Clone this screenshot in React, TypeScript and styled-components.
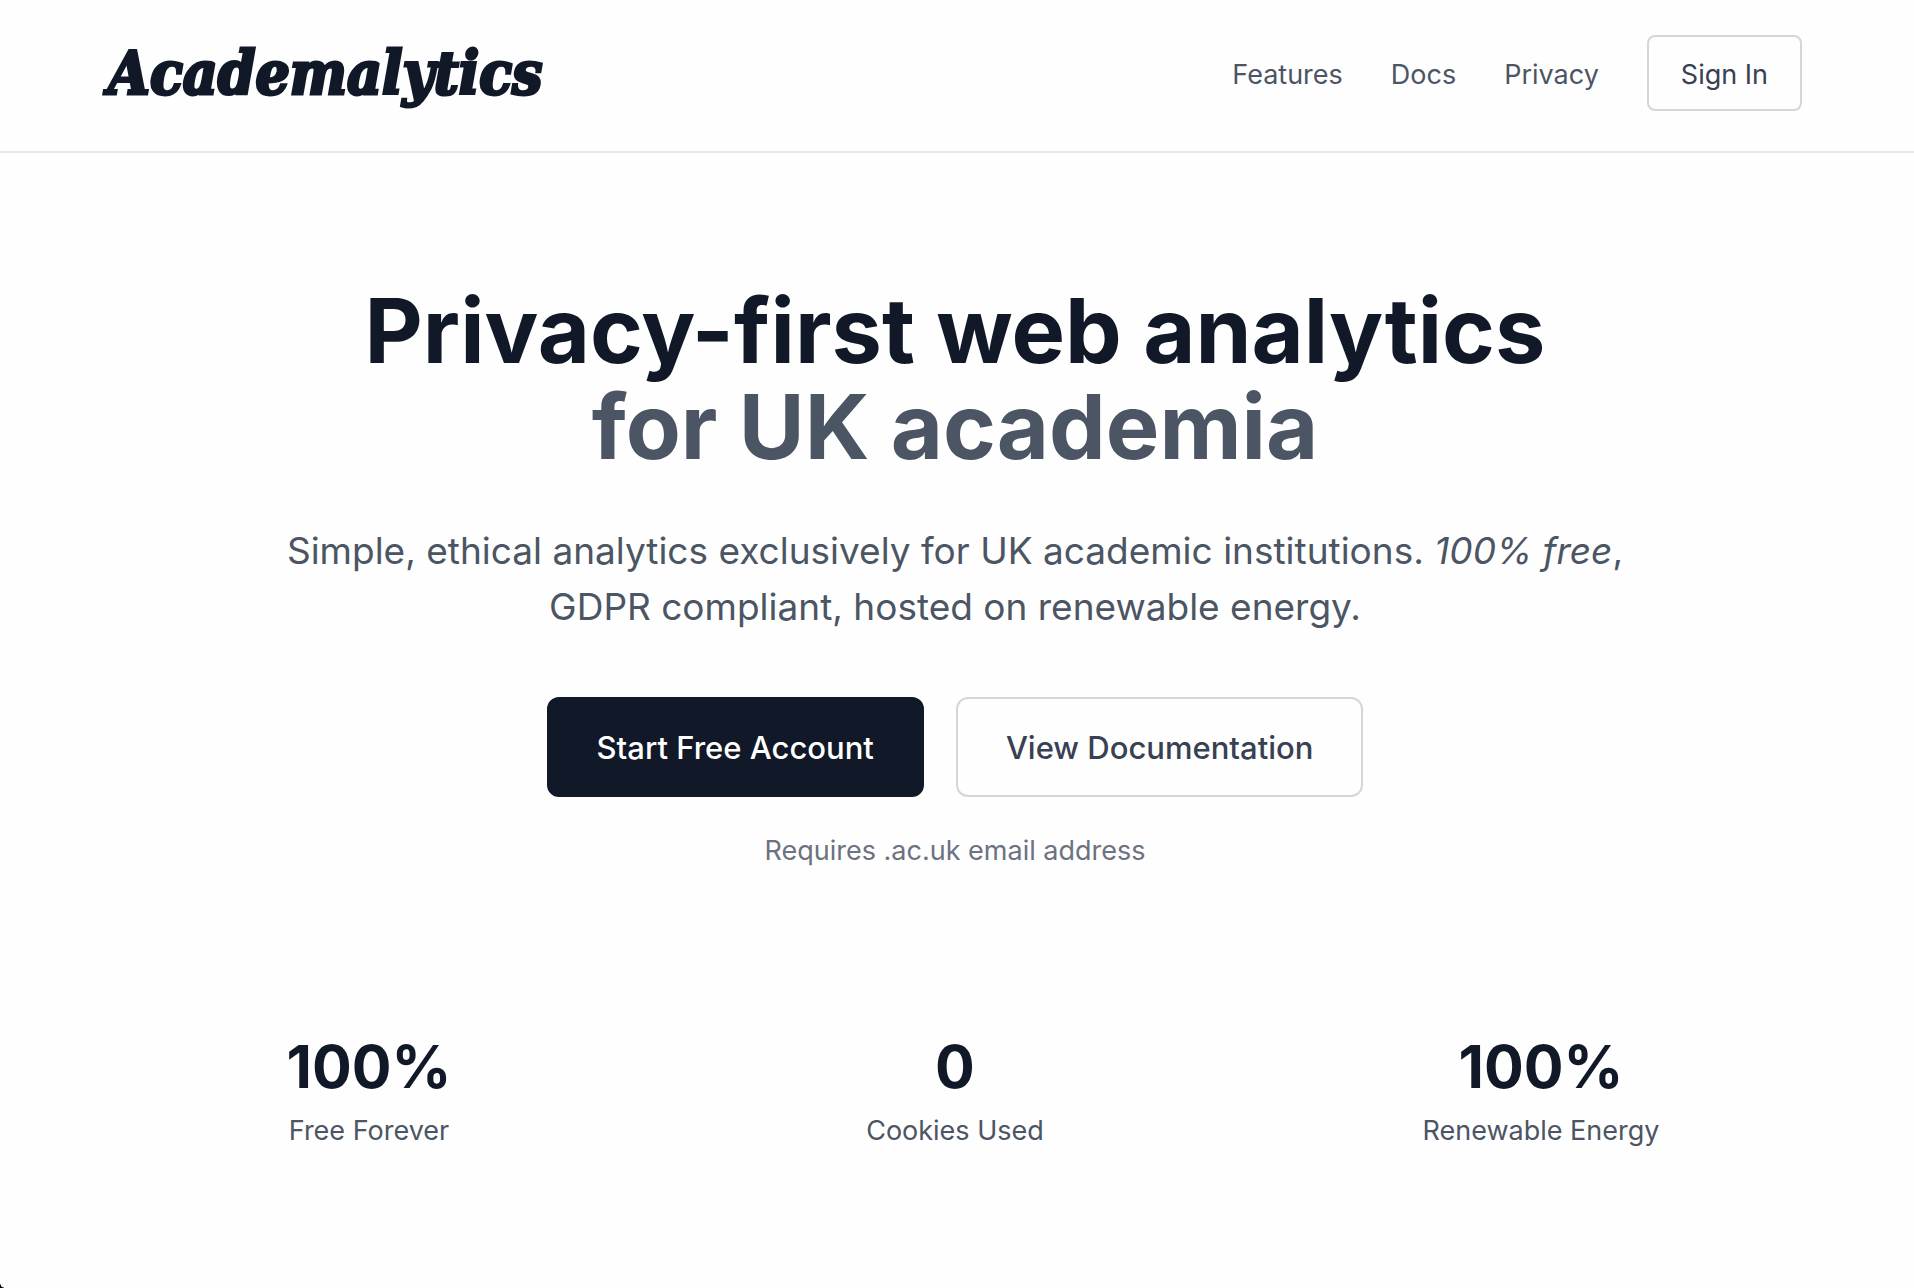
import React from "react";
import styled, { createGlobalStyle } from "styled-components";

const GlobalStyle = createGlobalStyle`
  *, *::before, *::after { box-sizing: border-box; }
  body {
    margin: 0;
    background: #fefefe;
    color: #111827;
    font-family: Inter, "Liberation Sans", sans-serif;
  }
  h1, p, dl, dt, dd { margin: 0; }
`;

const Page = styled.div`
  position: relative;
  min-height: 100vh;
  overflow: hidden;
`;

const Header = styled.header`
  display: flex;
  align-items: center;
  justify-content: space-between;
  padding: 35px 112px 40px 108px;
  border-bottom: 2px solid #e5e7eb;
`;

const Logo = styled.a`
  color: #111827;
  font-family: "DejaVu Serif Condensed", "DejaVu Serif", serif;
  font-size: 60px;
  font-style: italic;
  font-weight: 700;
  line-height: 76px;
  text-decoration: none;
  -webkit-text-stroke: 3px #111827;
`;

const Nav = styled.nav`
  display: flex;
  align-items: center;
  gap: 48px;
`;

const NavLink = styled.a`
  padding-top: 4px;
  color: #4b5563;
  font-size: 27px;
  line-height: 40px;
  text-decoration: none;
`;

const Button = styled.button<{ $primary?: boolean; $small?: boolean }>`
  padding: ${(p) => (p.$small ? "18px 32px 14px" : "25px 48px 23px")};
  border: 2px solid ${(p) => (p.$primary ? "#111827" : "#d4d6d9")};
  border-radius: ${(p) => (p.$small ? "8px" : "12px")};
  background: ${(p) => (p.$primary ? "#111827" : "transparent")};
  color: ${(p) => (p.$primary ? "#ffffff" : "#374151")};
  font-family: inherit;
  font-size: ${(p) => (p.$small ? "27px" : "31px")};
  font-weight: ${(p) => (p.$small ? 400 : 500)};
  line-height: ${(p) => (p.$small ? "40px" : "48px")};
  cursor: pointer;
`;

const Main = styled.main`
  padding: 130px 112px 120px 108px;
`;

const Hero = styled.section`
  display: flex;
  flex-direction: column;
  align-items: center;
  text-align: center;
`;

const Title = styled.h1`
  font-size: 90px;
  font-weight: 700;
  line-height: 96px;
`;

const TitleAccent = styled.span`
  display: block;
  color: #4b5563;
`;

const Lead = styled.p`
  max-width: 1344px;
  margin-top: 48px;
  color: #4b5563;
  font-size: 37px;
  line-height: 56px;
`;

const Actions = styled.div`
  display: flex;
  gap: 32px;
  margin-top: 62px;
`;

const Note = styled.p`
  margin-top: 34px;
  color: #6b7280;
  font-size: 27px;
  line-height: 40px;
`;

const Stats = styled.dl`
  display: grid;
  grid-template-columns: repeat(3, 1fr);
  gap: 64px;
  margin-top: 160px;
  text-align: center;
`;

const Stat = styled.div`
  display: flex;
  flex-direction: column-reverse;
  gap: 8px;
`;

const StatLabel = styled.dt`
  color: #4b5563;
  font-size: 27px;
  line-height: 40px;
`;

const StatValue = styled.dd`
  font-size: 59px;
  font-weight: 700;
  line-height: 72px;
`;

const WindowCorner = styled.div`
  position: absolute;
  bottom: 0;
  left: 0;
  width: 4px;
  height: 4px;
  background: radial-gradient(circle at 100% 0, transparent 3px, #000000 4px);
`;

const links = ["Features", "Docs", "Privacy"];

const stats = [
  { value: "100%", label: "Free Forever" },
  { value: "0", label: "Cookies Used" },
  { value: "100%", label: "Renewable Energy" },
];

export default function App() {
  return (
    <Page>
      <GlobalStyle />
      <Header>
        <Logo href="#">Academalytics</Logo>
        <Nav>
          {links.map((link) => (
            <NavLink key={link} href={`#${link.toLowerCase()}`}>
              {link}
            </NavLink>
          ))}
          <Button type="button" $small>
            Sign In
          </Button>
        </Nav>
      </Header>
      <Main>
        <Hero>
          <Title>
            Privacy-first web analytics
            <TitleAccent>for UK academia</TitleAccent>
          </Title>
          <Lead>
            Simple, ethical analytics exclusively for UK academic institutions. <em>100% free</em>,
            GDPR compliant, hosted on renewable energy.
          </Lead>
          <Actions>
            <Button type="button" $primary>
              Start Free Account
            </Button>
            <Button type="button">View Documentation</Button>
          </Actions>
          <Note>Requires .ac.uk email address</Note>
        </Hero>
        <Stats>
          {stats.map((stat) => (
            <Stat key={stat.label}>
              <StatLabel>{stat.label}</StatLabel>
              <StatValue>{stat.value}</StatValue>
            </Stat>
          ))}
        </Stats>
      </Main>
      <WindowCorner />
    </Page>
  );
}
